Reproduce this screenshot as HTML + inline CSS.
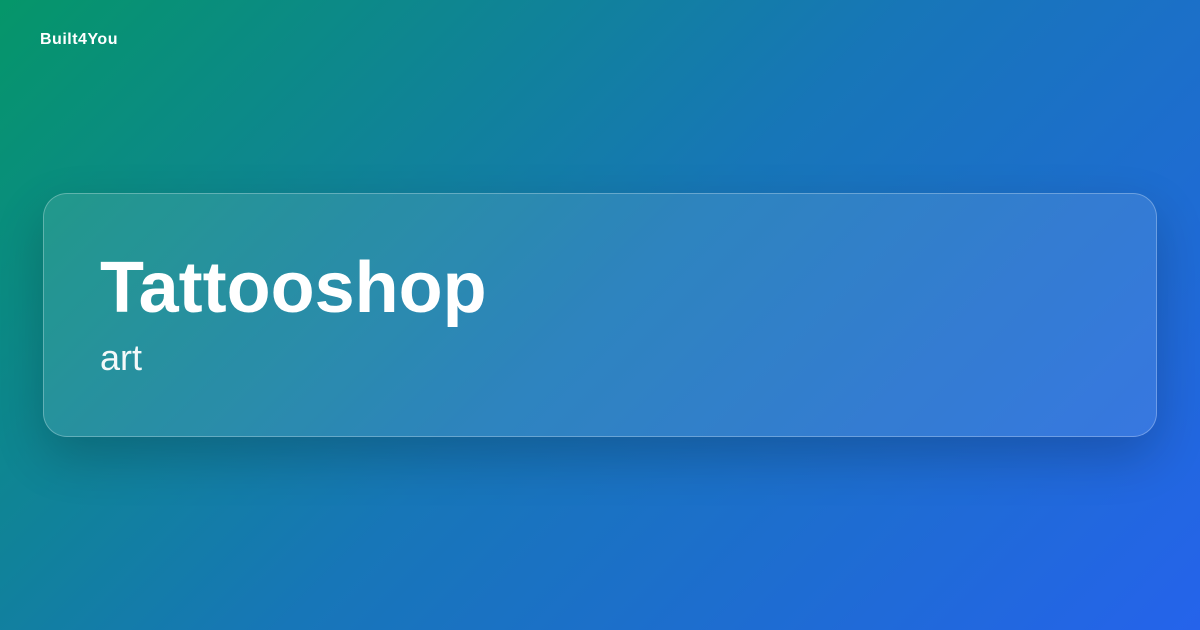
<!DOCTYPE html>
<html><head><style>
html,body{margin:0;padding:0}
body{width:1200px;height:630px;overflow:hidden;position:relative;
background:linear-gradient(135deg,#059669 0%,#1776b8 50%,#2563eb 100%);
font-family:"Liberation Sans",sans-serif;color:#fff}
.brand{position:absolute;left:40px;top:31px;font-size:16px;font-weight:bold;letter-spacing:0.5px}
.card{position:absolute;left:43px;top:193px;width:1112px;height:242px;border-radius:24px;
background:rgba(255,255,255,0.1);border:1px solid rgba(255,255,255,0.28);
box-shadow:0 20px 50px rgba(0,0,0,0.2)}
h1{position:absolute;left:56px;top:52px;margin:0;font-size:72px;font-weight:bold;line-height:84px}
.sub{position:absolute;left:56px;top:142px;font-size:36px;line-height:44px;opacity:0.95}
</style></head><body>
<div class="brand">Built4You</div>
<div class="card"><h1>Tattooshop</h1><div class="sub">art</div></div>
</body></html>
